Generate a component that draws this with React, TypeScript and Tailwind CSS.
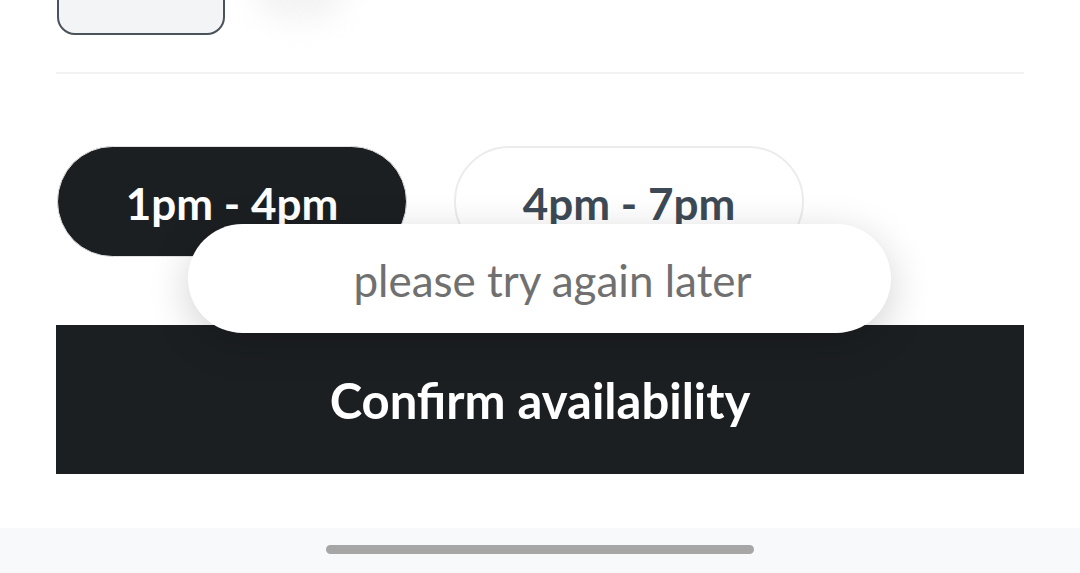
import React from 'react';

const slots = ['1pm - 4pm', '4pm - 7pm'];

export default function App() {
  const selected = 0;

  return (
    <div className="relative h-[573px] w-[1080px] overflow-hidden bg-white font-['Lato',sans-serif]">
      <div className="flex h-[528px] flex-col px-[56px]">
        {/* top card, cut off by the viewport */}
        <div className="flex items-start gap-[30px]">
          <div className="-mt-[26px] ml-px h-[61px] w-[168px] rounded-[18px] border-2 border-[#4a525a] bg-[#f2f4f6]" />
          <div className="-mt-[40px] h-[60px] w-[90px] rounded-full bg-[#f3f3f3] blur-[14px]" />
        </div>

        <div className="mt-[37px] h-[2px] w-full bg-[#f3f3f3]" />

        {/* time slots */}
        <div className="mt-[72px] flex gap-[47px] pl-px">
          {slots.map((s, i) => (
            <button
              key={s}
              className={
                i === selected
                  ? 'flex h-[111px] w-[350px] items-center justify-center rounded-full border border-[#e2e2e2] bg-[#1c1f22] pt-[2px] text-[44px] font-bold text-white'
                  : 'flex h-[111px] w-[350px] items-center justify-center rounded-full border-2 border-[#ececec] bg-white pt-[2px] text-[44px] font-bold text-[#3d4a55]'
              }
            >
              {s}
            </button>
          ))}
        </div>

        <button className="mt-[68px] flex h-[149px] w-full items-center justify-center bg-[#1c1f22] pt-[2px] text-[49px] font-bold text-white">
          Confirm availability
        </button>
      </div>

      {/* home indicator */}
      <div className="flex h-[45px] items-start justify-center bg-[#f8f9fa] pt-[17px]">
        <div className="h-[9px] w-[428px] rounded-full bg-[#a6a6a6]" />
      </div>

      {/* toast */}
      <div className="absolute left-[188px] top-[224px] flex h-[109px] w-[703px] items-center justify-center rounded-full bg-white pl-[26px] pt-[2px] shadow-[0_10px_40px_rgba(0,0,0,0.18)]">
        <span className="text-[44px] text-[#707070]">please try again later</span>
      </div>
    </div>
  );
}
